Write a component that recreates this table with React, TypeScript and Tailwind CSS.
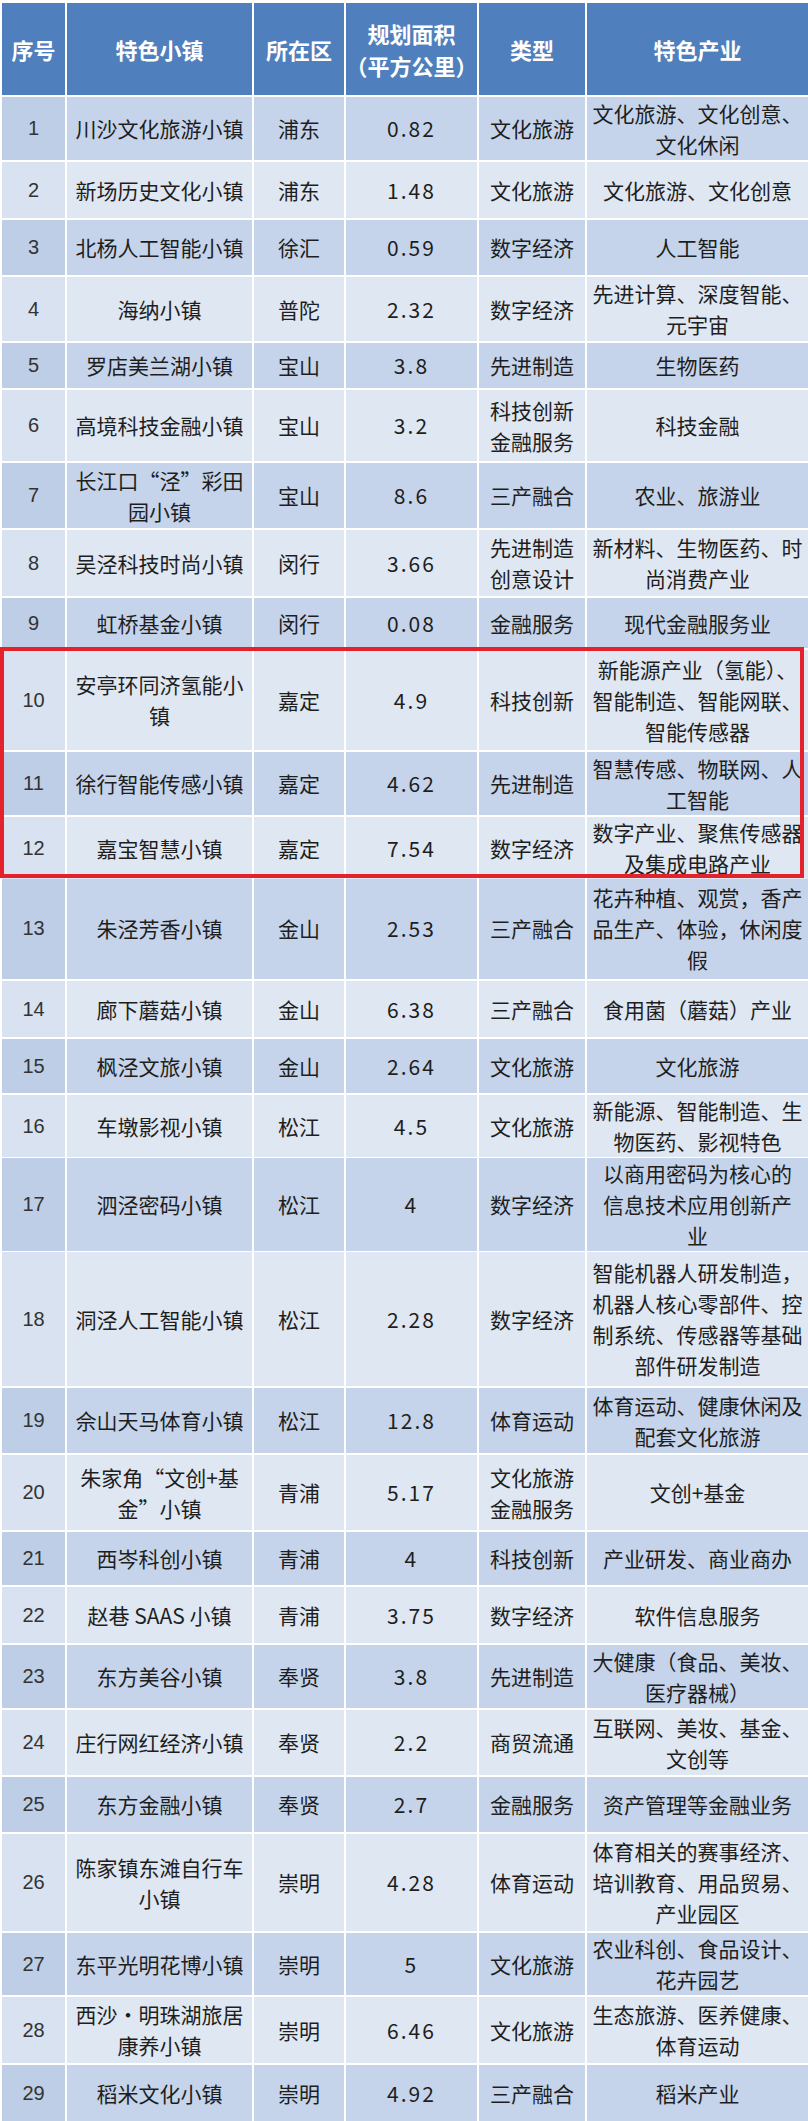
type Row = {
  no: string;
  name: string[];
  district: string;
  area: string;
  kind: string[];
  industry: string[];
  h: string;
};

const rows: Row[] = [
  { no: '1', name: ['川沙文化旅游小镇'], district: '浦东', area: '0.82', kind: ['文化旅游'], industry: ['文化旅游、文化创意、', '文化休闲'], h: 'h-[63px]' },
  { no: '2', name: ['新场历史文化小镇'], district: '浦东', area: '1.48', kind: ['文化旅游'], industry: ['文化旅游、文化创意'], h: 'h-[56px]' },
  { no: '3', name: ['北杨人工智能小镇'], district: '徐汇', area: '0.59', kind: ['数字经济'], industry: ['人工智能'], h: 'h-[55px]' },
  { no: '4', name: ['海纳小镇'], district: '普陀', area: '2.32', kind: ['数字经济'], industry: ['先进计算、深度智能、', '元宇宙'], h: 'h-[64px]' },
  { no: '5', name: ['罗店美兰湖小镇'], district: '宝山', area: '3.8', kind: ['先进制造'], industry: ['生物医药'], h: 'h-[45px]' },
  { no: '6', name: ['高境科技金融小镇'], district: '宝山', area: '3.2', kind: ['科技创新', '金融服务'], industry: ['科技金融'], h: 'h-[71px]' },
  { no: '7', name: ['长江口“泾”彩田', '园小镇'], district: '宝山', area: '8.6', kind: ['三产融合'], industry: ['农业、旅游业'], h: 'h-[65px]' },
  { no: '8', name: ['吴泾科技时尚小镇'], district: '闵行', area: '3.66', kind: ['先进制造', '创意设计'], industry: ['新材料、生物医药、时', '尚消费产业'], h: 'h-[66px]' },
  { no: '9', name: ['虹桥基金小镇'], district: '闵行', area: '0.08', kind: ['金融服务'], industry: ['现代金融服务业'], h: 'h-[50px]' },
];

const marked: Row[] = [
  { no: '10', name: ['安亭环同济氢能小', '镇'], district: '嘉定', area: '4.9', kind: ['科技创新'], industry: ['新能源产业（氢能）、', '智能制造、智能网联、', '智能传感器'], h: 'h-[100px]' },
  { no: '11', name: ['徐行智能传感小镇'], district: '嘉定', area: '4.62', kind: ['先进制造'], industry: ['智慧传感、物联网、人', '工智能'], h: 'h-[63px]' },
  { no: '12', name: ['嘉宝智慧小镇'], district: '嘉定', area: '7.54', kind: ['数字经济'], industry: ['数字产业、聚焦传感器', '及集成电路产业'], h: 'h-[59px]' },
];

const rest: Row[] = [
  { no: '13', name: ['朱泾芳香小镇'], district: '金山', area: '2.53', kind: ['三产融合'], industry: ['花卉种植、观赏，香产', '品生产、体验，休闲度', '假'], h: 'h-[101px]' },
  { no: '14', name: ['廊下蘑菇小镇'], district: '金山', area: '6.38', kind: ['三产融合'], industry: ['食用菌（蘑菇）产业'], h: 'h-[56px]' },
  { no: '15', name: ['枫泾文旅小镇'], district: '金山', area: '2.64', kind: ['文化旅游'], industry: ['文化旅游'], h: 'h-[54px]' },
  { no: '16', name: ['车墩影视小镇'], district: '松江', area: '4.5', kind: ['文化旅游'], industry: ['新能源、智能制造、生', '物医药、影视特色'], h: 'h-[61px]' },
  { no: '17', name: ['泗泾密码小镇'], district: '松江', area: '4', kind: ['数字经济'], industry: ['以商用密码为核心的', '信息技术应用创新产', '业'], h: 'h-[92px]' },
  { no: '18', name: ['洞泾人工智能小镇'], district: '松江', area: '2.28', kind: ['数字经济'], industry: ['智能机器人研发制造，', '机器人核心零部件、控', '制系统、传感器等基础', '部件研发制造'], h: 'h-[134px]' },
  { no: '19', name: ['佘山天马体育小镇'], district: '松江', area: '12.8', kind: ['体育运动'], industry: ['体育运动、健康休闲及', '配套文化旅游'], h: 'h-[65px]' },
  { no: '20', name: ['朱家角“文创+基', '金”小镇'], district: '青浦', area: '5.17', kind: ['文化旅游', '金融服务'], industry: ['文创+基金'], h: 'h-[75px]' },
  { no: '21', name: ['西岑科创小镇'], district: '青浦', area: '4', kind: ['科技创新'], industry: ['产业研发、商业商办'], h: 'h-[53px]' },
  { no: '22', name: ['赵巷 SAAS 小镇'], district: '青浦', area: '3.75', kind: ['数字经济'], industry: ['软件信息服务'], h: 'h-[56px]' },
  { no: '23', name: ['东方美谷小镇'], district: '奉贤', area: '3.8', kind: ['先进制造'], industry: ['大健康（食品、美妆、', '医疗器械）'], h: 'h-[63px]' },
  { no: '24', name: ['庄行网红经济小镇'], district: '奉贤', area: '2.2', kind: ['商贸流通'], industry: ['互联网、美妆、基金、', '文创等'], h: 'h-[65px]' },
  { no: '25', name: ['东方金融小镇'], district: '奉贤', area: '2.7', kind: ['金融服务'], industry: ['资产管理等金融业务'], h: 'h-[55px]' },
  { no: '26', name: ['陈家镇东滩自行车', '小镇'], district: '崇明', area: '4.28', kind: ['体育运动'], industry: ['体育相关的赛事经济、', '培训教育、用品贸易、', '产业园区'], h: 'h-[97px]' },
  { no: '27', name: ['东平光明花博小镇'], district: '崇明', area: '5', kind: ['文化旅游'], industry: ['农业科创、食品设计、', '花卉园艺'], h: 'h-[62px]' },
  { no: '28', name: ['西沙·明珠湖旅居', '康养小镇'], district: '崇明', area: '6.46', kind: ['文化旅游'], industry: ['生态旅游、医养健康、', '体育运动'], h: 'h-[66px]' },
  { no: '29', name: ['稻米文化小镇'], district: '崇明', area: '4.92', kind: ['三产融合'], industry: ['稻米产业'], h: 'h-[56px]' },
];

const cols = 'grid grid-cols-[63px_185px_90px_131px_106px_221px] gap-x-[2px]';
const cell = 'flex flex-col items-center justify-center text-center leading-[31px]';

function Lines({ lines }: { lines: string[] }) {
  return (
    <>
      {lines.map((l) => (
        <span key={l} className="whitespace-nowrap">{l}</span>
      ))}
    </>
  );
}

function TableRow({ r }: { r: Row }) {
  const odd = Number(r.no) % 2 === 1;
  const bg = odd ? 'bg-[#c5d4ea]' : 'bg-[#dfe7f2]';
  const first = odd ? 'bg-[#bdcee6]' : 'bg-[#d8e2f0]';
  return (
    <div className={`${cols} ${r.h}`}>
      <div className={`${cell} ${first} text-[20px] text-[#333] font-['Liberation_Sans',sans-serif]`}>{r.no}</div>
      <div className={`${cell} ${bg}`}><Lines lines={r.name} /></div>
      <div className={`${cell} ${bg}`}>{r.district}</div>
      <div className={`${cell} ${bg} tracking-[0.1em]`}>{r.area}</div>
      <div className={`${cell} ${bg}`}><Lines lines={r.kind} /></div>
      <div className={`${cell} ${bg}`}><Lines lines={r.industry} /></div>
    </div>
  );
}

export default function App() {
  const head = `${cell} bg-[#4f80bd] text-white font-bold text-[22px]`;
  return (
    <div className="w-[808px] bg-white pt-[3px] pl-[2px] font-['Noto_Sans_CJK_SC','Noto_Sans',sans-serif] text-[21px] text-[#1e1e1e] overflow-hidden h-[2121px]">
      <div className="flex flex-col gap-y-[2px]">
        <div className={`${cols} h-[92px]`}>
          <div className={head}>序号</div>
          <div className={head}>特色小镇</div>
          <div className={head}>所在区</div>
          <div className={`${head} leading-[32px]`}>
            <span>规划面积</span>
            <span className="whitespace-nowrap">（平方公里）</span>
          </div>
          <div className={head}>类型</div>
          <div className={head}>特色产业</div>
        </div>
        {rows.map((r) => <TableRow key={r.no} r={r} />)}
        <div className="relative flex flex-col gap-y-[2px]">
          {marked.map((r) => <TableRow key={r.no} r={r} />)}
          <div className="pointer-events-none absolute -left-[2px] right-[4px] -top-[3px] -bottom-[2px] border-[4px] border-[#e4222b]" />
        </div>
        {rest.map((r) => <TableRow key={r.no} r={r} />)}
      </div>
    </div>
  );
}
